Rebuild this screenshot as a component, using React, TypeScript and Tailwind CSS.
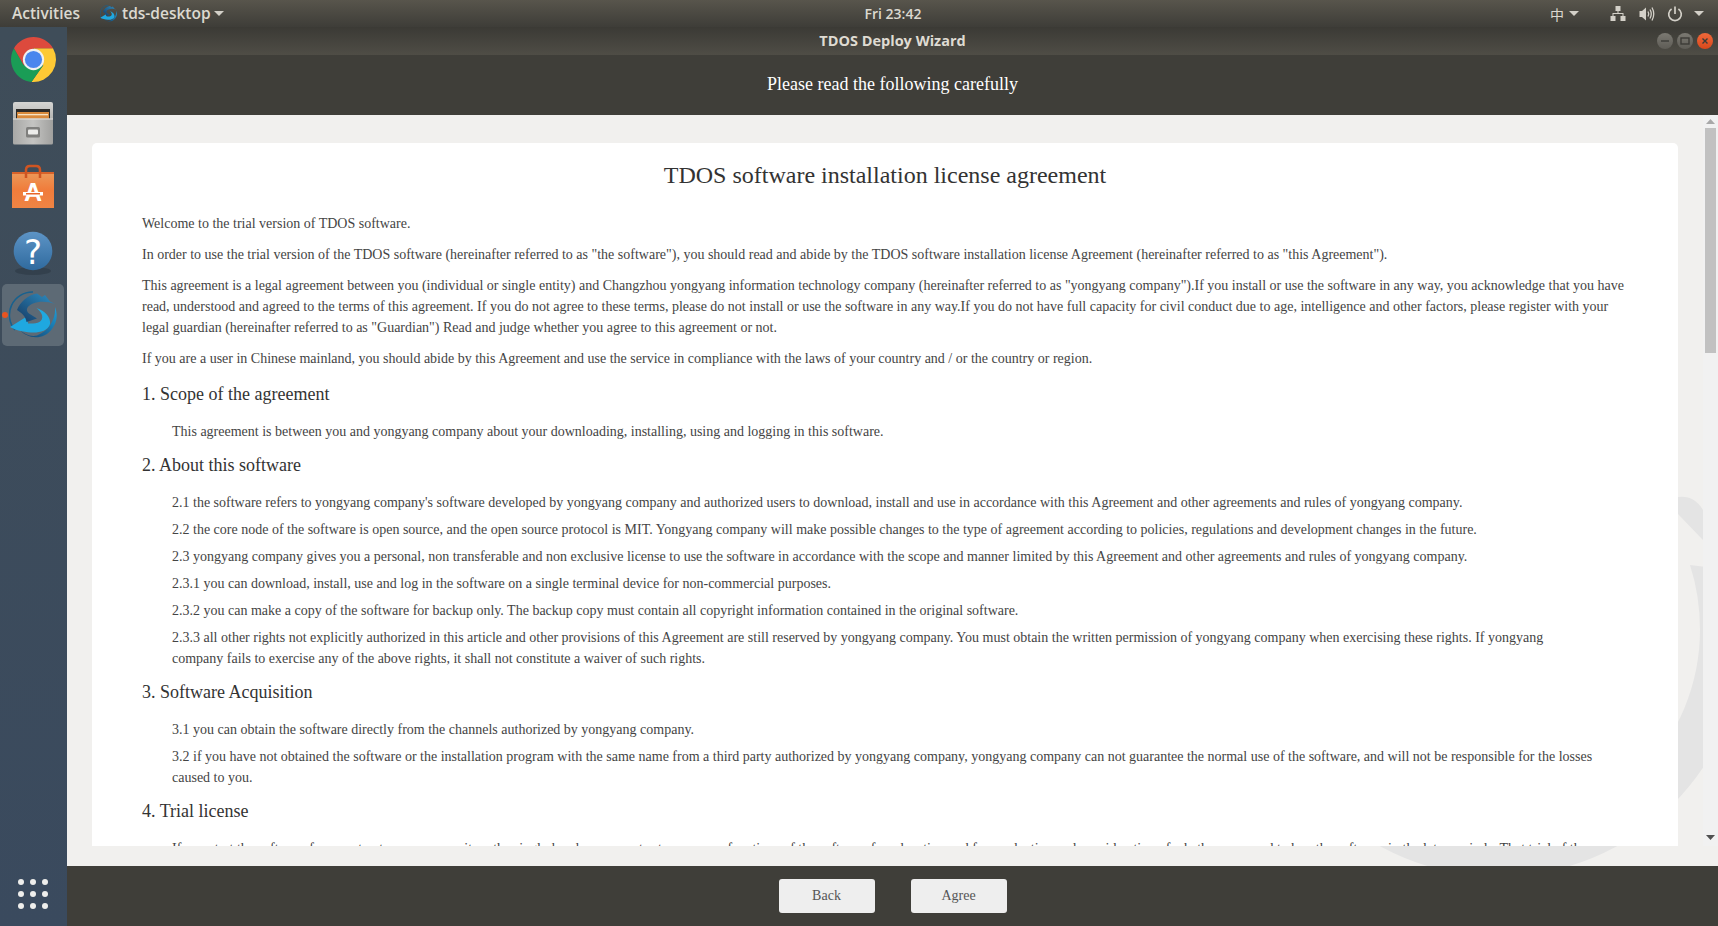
import React from "react";

const serif = "font-['Liberation_Serif',serif]";
const ui = "font-['Open_Sans',sans-serif]";

function Caret({ className = "" }: { className?: string }) {
  return (
    <svg width="10" height="5" viewBox="0 0 10 5" className={className}>
      <path d="M0 0H10L5 5Z" fill="#d3d0c8" />
    </svg>
  );
}

function TdsLogo({ size }: { size: number }) {
  return (
    <svg width={size} height={size} viewBox="0 0 48 48" fill="none">
      <defs>
        <linearGradient id="tdsCres" x1="0" y1="1" x2="1" y2="0">
          <stop offset="0" stopColor="#123f6c" />
          <stop offset="1" stopColor="#1f9ed9" />
        </linearGradient>
        <linearGradient id="tdsDark" x1="0" y1="1" x2="1" y2="0">
          <stop offset="0" stopColor="#163a63" />
          <stop offset="1" stopColor="#2e8fc4" />
        </linearGradient>
      </defs>
      <path d="M24 1A23 23 0 0 0 6 39" stroke="#17618f" strokeWidth="1.5" />
      <path d="M10 38C18 48 34 50 43 38C48 31 49 24 46 16C47 28 40 40 28 44.5C21 46 15 43 10 38Z" fill="url(#tdsCres)" />
      <path d="M1 36L17 26C18 28 19 30 19 32.5C26 33 35 32 33 24C32 21 30 19 27.5 17C36 20 42 26 41 33C39 40 30 42 22 41.5C14 41 6 39 1 36Z" fill="#1fa8e0" />
      <path d="M8 19C11 11 19 4 28 2.5L33 6L36 4L41 10.5L46 13C38 10 30 10 24 12.5C18 15 16 19 20 22.5L28 27.5L17.5 31C17 26 13 22 8 19Z" fill="url(#tdsDark)" />
    </svg>
  );
}

function Chrome() {
  return (
    <svg width="45" height="45" viewBox="2 2 44 44">
      <path d="M43.05 13A22 22 0 0 1 22 45.9L33.5 29.5L24 13Z" fill="#fdc935" />
      <path d="M4.95 13A22 22 0 0 0 22 45.9L33.5 29.5L14.47 29.5Z" fill="#1a9d56" />
      <path d="M4.95 13A22 22 0 0 1 43.05 13L24 13L14.47 29.5Z" fill="#dd4a3d" />
      <circle cx="24" cy="24" r="10.4" fill="#f1f1f1" />
      <circle cx="24" cy="24" r="8.4" fill="#4a86ee" />
    </svg>
  );
}

function Files() {
  return (
    <svg width="44" height="46" viewBox="0 0 44 46">
      <defs>
        <linearGradient id="cabTop" x1="0" y1="0" x2="0" y2="1">
          <stop offset="0" stopColor="#d5d5d3" />
          <stop offset="1" stopColor="#8d8d8b" />
        </linearGradient>
        <linearGradient id="cabFront" x1="0" y1="0" x2="1" y2="0">
          <stop offset="0" stopColor="#a8a8a6" />
          <stop offset="0.5" stopColor="#c4c4c2" />
          <stop offset="1" stopColor="#a0a09e" />
        </linearGradient>
      </defs>
      <rect x="2" y="2" width="40" height="36" rx="2" fill="url(#cabTop)" />
      <rect x="5" y="9" width="34" height="10" fill="#2c2b29" />
      <rect x="6" y="12" width="32" height="7" fill="#d98a3c" />
      <rect x="7" y="14" width="30" height="1.3" fill="#f7e3c5" />
      <rect x="2" y="18.5" width="40" height="26" rx="1.5" fill="url(#cabFront)" />
      <rect x="2" y="18.5" width="40" height="1" fill="#e4e4e2" />
      <rect x="15" y="27" width="14" height="10.5" rx="1.5" fill="#7f7f7d" />
      <rect x="17" y="29.5" width="10" height="5" rx="1" fill="#ececea" />
    </svg>
  );
}

function Bag() {
  return (
    <svg width="44" height="46" viewBox="0 0 44 46">
      <defs>
        <linearGradient id="bagG" x1="0" y1="0" x2="0" y2="1">
          <stop offset="0" stopColor="#ec9a5a" />
          <stop offset="0.5" stopColor="#f07c3b" />
          <stop offset="1" stopColor="#ef8444" />
        </linearGradient>
      </defs>
      <rect x="1" y="8" width="42" height="36" fill="url(#bagG)" />
      <rect x="1" y="8" width="42" height="2" fill="#d8622a" />
      <path d="M15 14V6Q15 2 19 2H25Q29 2 29 6V14" fill="none" stroke="#cf5522" strokeWidth="2.5" />
      <text x="22" y="37" textAnchor="middle" fontSize="25" fontWeight="700" fill="#fff" fontFamily="'Liberation Sans',sans-serif">A</text>
      <rect x="12" y="28" width="20" height="3.5" fill="#fff" />
      <rect x="15" y="29" width="14" height="1.5" fill="#e8662a" />
    </svg>
  );
}

function Help() {
  return (
    <svg width="44" height="50" viewBox="0 0 44 50">
      <defs>
        <linearGradient id="helpG" x1="0" y1="0" x2="0" y2="1">
          <stop offset="0" stopColor="#5d94c6" />
          <stop offset="1" stopColor="#2f6a9e" />
        </linearGradient>
      </defs>
      <ellipse cx="22" cy="45" rx="18" ry="4" fill="#2f3c47" opacity="0.7" />
      <circle cx="22" cy="25" r="19.3" fill="url(#helpG)" />
      <text x="22" y="38" textAnchor="middle" fontSize="34" fontWeight="400" fill="#fff" fontFamily="'DejaVu Sans',sans-serif">?</text>
    </svg>
  );
}

function Network() {
  return (
    <svg width="16" height="16" viewBox="0 0 16 16" fill="#d3d0c8">
      <rect x="5.5" y="0" width="5" height="5" />
      <rect x="0.5" y="10" width="5" height="5" />
      <rect x="10.5" y="10" width="5" height="5" />
      <path d="M7.5 5H8.5V7H13.5V10H12.5V8H3.5V10H2.5V7H7.5Z" />
    </svg>
  );
}

function Volume() {
  return (
    <svg width="16" height="16" viewBox="0 0 16 16" fill="none" stroke="#d3d0c8">
      <path d="M0.5 5H3L7 1.5V14.5L3 11H0.5Z" fill="#d3d0c8" stroke="none" />
      <path d="M9 5.5Q10.5 8 9 10.5" strokeWidth="1.3" />
      <path d="M11 3.5Q13.5 8 11 12.5" strokeWidth="1.3" />
      <path d="M13 1.5Q16.5 8 13 14.5" strokeWidth="1.3" />
    </svg>
  );
}

function Power() {
  return (
    <svg width="16" height="16" viewBox="0 0 16 16" fill="none" stroke="#d3d0c8" strokeWidth="1.7">
      <path d="M4.6 3A6.3 6.3 0 1 0 11.4 3" />
      <path d="M8 0.5V8" />
    </svg>
  );
}

function TopBar() {
  return (
    <div className={`h-[27px] shrink-0 grid grid-cols-[864px_58px_1fr] items-center bg-gradient-to-b from-[#58554c] to-[#3e3d38] text-[#dcd9d0] text-[14px] ${ui} font-semibold`}>
      <div className="flex items-center pl-[12px]">
        <span className="w-[88px] text-[15.5px]">Activities</span>
        <TdsLogo size={17} />
        <span className="ml-[5px] w-[92px] text-[15.5px]">tds-desktop</span>
        <Caret />
      </div>
      <span className="whitespace-nowrap text-center">Fri 23:42</span>
      <div className="flex items-center pl-[628px]">
        <span className="w-[19px] font-['Noto_Sans_CJK_SC',sans-serif] font-normal text-[14px] leading-none">中</span>
        <Caret />
        <div className="ml-[31px]"><Network /></div>
        <div className="ml-[13px]"><Volume /></div>
        <div className="ml-[12px]"><Power /></div>
        <Caret className="ml-[11px]" />
      </div>
    </div>
  );
}

function Dock() {
  const slot = "h-[62px] w-[62px] flex items-center justify-center shrink-0";
  return (
    <div className="w-[67px] shrink-0 flex flex-col items-center gap-[2px] pt-[1px] pr-[1px] bg-gradient-to-b from-[#3f4d59] to-[#3a4a5e]">
      <div className={slot}><Chrome /></div>
      <div className={slot}><Files /></div>
      <div className={slot}><Bag /></div>
      <div className={slot}><Help /></div>
      <div className={`${slot} relative rounded-[5px] bg-[#5d6a75]`}>
        <TdsLogo size={48} />
        <span className="absolute left-[0px] top-[28px] h-[6px] w-[6px] rounded-full bg-[#e95420]" />
      </div>
      <div className="mt-auto mb-[17px] grid grid-cols-3 gap-[6px]">
        {Array.from({ length: 9 }).map((_, i) => (
          <span key={i} className="h-[6px] w-[6px] rounded-full bg-[#eeeeec]" />
        ))}
      </div>
    </div>
  );
}

function WinBtn({ kind }: { kind: "min" | "max" | "close" }) {
  const bg = kind === "close" ? "bg-gradient-to-b from-[#f0683a] to-[#d9481a]" : "bg-gradient-to-b from-[#7b7972] to-[#5e5c56]";
  return (
    <div className={`h-[16px] w-[16px] rounded-full ${bg} flex items-center justify-center`}>
      <svg width="10" height="10" viewBox="0 0 10 10" fill="none" stroke="#3c3b37" strokeWidth="1.4">
        {kind === "min" && <path d="M1 5H9" />}
        {kind === "max" && <rect x="1" y="2" width="8" height="6" />}
        {kind === "close" && <path d="M2.5 2.5L7.5 7.5M7.5 2.5L2.5 7.5" />}
      </svg>
    </div>
  );
}

function TitleBar() {
  return (
    <div className={`h-[28px] shrink-0 grid grid-cols-[1fr_auto_1fr] items-center bg-gradient-to-b from-[#3b3a35] to-[#4f4d46] text-[#dfdbd2] text-[14.5px] font-bold ${ui}`}>
      <span />
      <span className="pb-[1px]">TDOS Deploy Wizard</span>
      <div className="flex justify-end gap-[4px] pr-[5px]">
        <WinBtn kind="min" />
        <WinBtn kind="max" />
        <WinBtn kind="close" />
      </div>
    </div>
  );
}

function Watermark() {
  return (
    <svg className="absolute left-0 top-0" width="1651" height="751" viewBox="67 115 1651 751">
      <path d="M1678 514V497Q1694 495 1703 510V540Z" fill="#e4e4e4" />
      <path d="M1690 565L1745 572V630A245 245 0 0 1 1252 630H1294A203 203 0 0 0 1700 630Q1700 596 1690 565Z" fill="#e4e4e4" />
    </svg>
  );
}

function H2({ children }: { children: React.ReactNode }) {
  return <h2 className="text-[18px] leading-[27px] text-[#333] mt-[10px] first-of-type:mt-[12px] mb-[13px]">{children}</h2>;
}

function P({ children }: { children: React.ReactNode }) {
  return <p className="mb-[10px]">{children}</p>;
}

function Sub({ children }: { children: React.ReactNode }) {
  return <p className="mb-[6px] pl-[30px] pr-[30px]">{children}</p>;
}

function Agreement() {
  return (
    <div className={`bg-white rounded-t-[5px] pt-[14px] px-[50px] text-[14px] leading-[21px] text-[#444] ${serif}`}>
      <h1 className="text-center text-[24px] leading-[36px] text-[#333] mb-[20px]">TDOS software installation license agreement</h1>
      <P>Welcome to the trial version of TDOS software.</P>
      <P>In order to use the trial version of the TDOS software (hereinafter referred to as "the software"), you should read and abide by the TDOS software installation license Agreement (hereinafter referred to as "this Agreement").</P>
      <P>This agreement is a legal agreement between you (individual or single entity) and Changzhou yongyang information technology company (hereinafter referred to as "yongyang company").If you install or use the software in any way, you acknowledge that you have read, understood and agreed to the terms of this agreement. If you do not agree to these terms, please do not install or use the software in any way.If you do not have full capacity for civil conduct due to age, intelligence and other factors, please register with your legal guardian (hereinafter referred to as "Guardian") Read and judge whether you agree to this agreement or not.</P>
      <P>If you are a user in Chinese mainland, you should abide by this Agreement and use the service in compliance with the laws of your country and / or the country or region.</P>
      <H2>1. Scope of the agreement</H2>
      <Sub>This agreement is between you and yongyang company about your downloading, installing, using and logging in this software.</Sub>
      <H2>2. About this software</H2>
      <Sub>2.1 the software refers to yongyang company's software developed by yongyang company and authorized users to download, install and use in accordance with this Agreement and other agreements and rules of yongyang company.</Sub>
      <Sub>2.2 the core node of the software is open source, and the open source protocol is MIT. Yongyang company will make possible changes to the type of agreement according to policies, regulations and development changes in the future.</Sub>
      <Sub>2.3 yongyang company gives you a personal, non transferable and non exclusive license to use the software in accordance with the scope and manner limited by this Agreement and other agreements and rules of yongyang company.</Sub>
      <Sub>2.3.1 you can download, install, use and log in the software on a single terminal device for non-commercial purposes.</Sub>
      <Sub>2.3.2 you can make a copy of the software for backup only. The backup copy must contain all copyright information contained in the original software.</Sub>
      <Sub>2.3.3 all other rights not explicitly authorized in this article and other provisions of this Agreement are still reserved by yongyang company. You must obtain the written permission of yongyang company when exercising these rights. If yongyang company fails to exercise any of the above rights, it shall not constitute a waiver of such rights.</Sub>
      <H2>3. Software Acquisition</H2>
      <Sub>3.1 you can obtain the software directly from the channels authorized by yongyang company.</Sub>
      <Sub>3.2 if you have not obtained the software or the installation program with the same name from a third party authorized by yongyang company, yongyang company can not guarantee the normal use of the software, and will not be responsible for the losses caused to you.</Sub>
      <H2>4. Trial license</H2>
      <Sub>If you start the software for your trust, you may use it on the single-hands, you can try to use some functions of the software for education and for production and consideration of whether you need to buy the software in the later periods. That trial of the</Sub>
    </div>
  );
}

function Scrollbar() {
  return (
    <div className="w-[15px] shrink-0 relative flex flex-col items-center bg-[#f1f1f1]">
      <svg width="9" height="5" viewBox="0 0 9 5" className="mt-[4px]"><path d="M0 5H9L4.5 0Z" fill="#a8a8a8" /></svg>
      <div className="mt-[4px] h-[225px] w-[11px] bg-[#c1c1c1]" />
      <svg width="9" height="5" viewBox="0 0 9 5" className="mt-auto mb-[6px]"><path d="M0 0H9L4.5 5Z" fill="#505050" /></svg>
    </div>
  );
}

export default function App() {
  return (
    <div className="h-[926px] w-[1718px] flex flex-col overflow-hidden">
      <TopBar />
      <div className="flex flex-1 min-h-0">
        <Dock />
        <div className="flex-1 min-w-0 flex flex-col">
          <TitleBar />
          <div className={`h-[60px] shrink-0 flex items-center justify-center pb-[2px] bg-[#3f3e39] text-white text-[18px] ${serif}`}>
            Please read the following carefully
          </div>
          <div className="relative flex-1 min-h-0 bg-[#f1f0ee] overflow-hidden">
            <Watermark />
            <div className="relative h-[731px] flex">
              <div className="flex-1 min-w-0 overflow-hidden pt-[28px] px-[25px]">
                <Agreement />
              </div>
              <Scrollbar />
            </div>
          </div>
          <div className={`h-[60px] shrink-0 flex items-center justify-center gap-[36px] bg-[#3f3e39] text-[14px] text-[#555] ${serif}`}>
            <button className="h-[34px] w-[96px] rounded-[3px] bg-[#eeeeee] pb-[2px]">Back</button>
            <button className="h-[34px] w-[96px] rounded-[3px] bg-[#eeeeee] pb-[2px]">Agree</button>
          </div>
        </div>
      </div>
    </div>
  );
}
